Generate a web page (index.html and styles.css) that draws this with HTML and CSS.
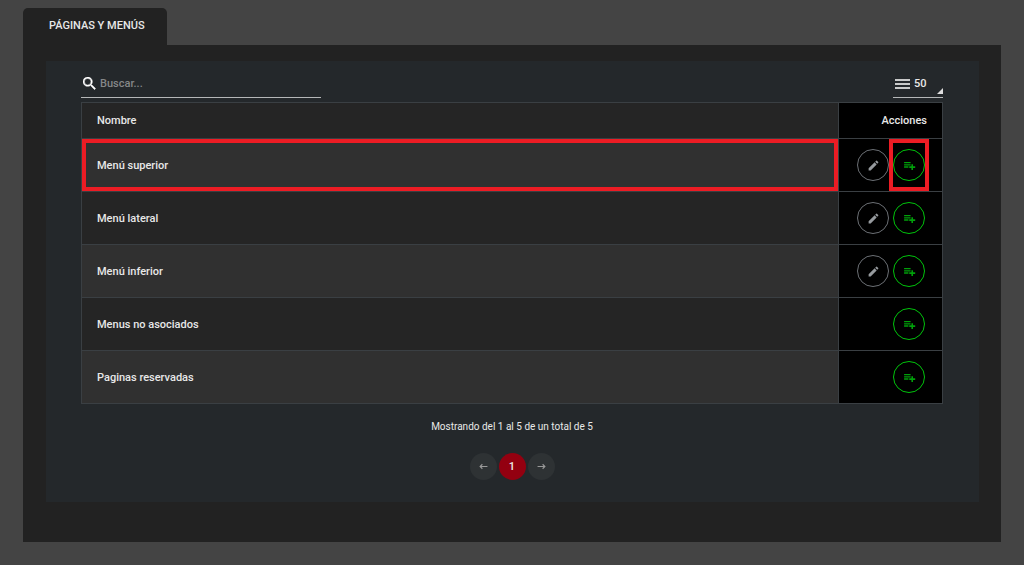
FILE: index.html
```html
<!DOCTYPE html>
<html lang="es">
<head>
<meta charset="utf-8">
<meta name="viewport" content="width=device-width, initial-scale=1">
<title>Páginas y menús</title>
<link rel="stylesheet" href="styles.css">
</head>
<body>
<svg class="sprite" aria-hidden="true">
  <symbol id="pencil" viewBox="0 0 24 24"><path d="M3 17.25V21h3.75L17.8 9.95l-3.75-3.75L3 17.25zM20.7 7.05a1 1 0 0 0 0-1.42l-2.34-2.33a1 1 0 0 0-1.41 0l-1.83 1.83 3.75 3.75 1.83-1.83z"/></symbol>
  <symbol id="list-add" viewBox="0 0 24 24"><path d="M14 9.5H2v2.5h12V9.5zm0-4H2V8h12V5.500zm4.500 8v-4h-3v4h-4v3h4v4h3v-4h4v-3h-4zM2 16h8v-2.500H2V16z"/></symbol>
</svg>
<main class="page">
  <nav class="tabs"><a class="tab" href="#paginas">PÁGINAS Y MENÚS</a></nav>
  <section class="panel" id="paginas">
    <div class="card">
      <div class="toolbar">
        <label class="search">
          <svg class="search-icon" viewBox="3 3 18 18" aria-hidden="true"><path d="M15.5 14h-.8l-.3-.3A6.5 6.5 0 1 0 13.7 14.4l.3.3v.8l5 5 1.5-1.5-5-5zm-6 0a4.5 4.5 0 1 1 0-9 4.500 4.500 0 0 1 0 9z"/></svg>
          <input class="search-input" type="text" placeholder="Buscar..." aria-label="Buscar">
        </label>
        <label class="page-size">
          <svg class="lines-icon" viewBox="0 0 15 10" aria-hidden="true"><path d="M0 .2h15v1.600H0zM0 4.200h15v1.600H0zM0 8.200h15v1.600H0z"/></svg>
          <select class="size-select" aria-label="Registros por página"><option>50</option><option>100</option></select>
        </label>
      </div>
      <table class="menus">
        <thead>
          <tr><th class="name" scope="col">Nombre</th><th class="actions" scope="col">Acciones</th></tr>
        </thead>
        <tbody>
          <tr>
            <td class="name marked">Menú superior</td>
            <td class="actions"><div class="buttons">
              <button class="round edit" type="button" aria-label="Editar"><svg class="pencil"><use href="#pencil"/></svg></button>
              <button class="round add marked" type="button" aria-label="Añadir"><svg class="list-add"><use href="#list-add"/></svg></button>
            </div></td>
          </tr>
          <tr>
            <td class="name">Menú lateral</td>
            <td class="actions"><div class="buttons">
              <button class="round edit" type="button" aria-label="Editar"><svg class="pencil"><use href="#pencil"/></svg></button>
              <button class="round add" type="button" aria-label="Añadir"><svg class="list-add"><use href="#list-add"/></svg></button>
            </div></td>
          </tr>
          <tr>
            <td class="name">Menú inferior</td>
            <td class="actions"><div class="buttons">
              <button class="round edit" type="button" aria-label="Editar"><svg class="pencil"><use href="#pencil"/></svg></button>
              <button class="round add" type="button" aria-label="Añadir"><svg class="list-add"><use href="#list-add"/></svg></button>
            </div></td>
          </tr>
          <tr>
            <td class="name">Menus no asociados</td>
            <td class="actions"><div class="buttons">
              <button class="round add" type="button" aria-label="Añadir"><svg class="list-add"><use href="#list-add"/></svg></button>
            </div></td>
          </tr>
          <tr>
            <td class="name">Paginas reservadas</td>
            <td class="actions"><div class="buttons">
              <button class="round add" type="button" aria-label="Añadir"><svg class="list-add"><use href="#list-add"/></svg></button>
            </div></td>
          </tr>
        </tbody>
      </table>
      <p class="summary">Mostrando del 1 al 5 de un total de 5</p>
      <nav class="pager" aria-label="Paginación">
        <button class="page-button" type="button" aria-label="Anterior"><svg class="arrow" viewBox="0 0 16 12"><path d="M15 6H2M6 2L2 6l4 4"/></svg></button>
        <button class="page-button current" type="button">1</button>
        <button class="page-button" type="button" aria-label="Siguiente"><svg class="arrow" viewBox="0 0 16 12"><path d="M1 6h13M10 2l4 4-4 4"/></svg></button>
      </nav>
    </div>
  </section>
</main>
</body>
</html>
```

FILE: styles.css
```css
* { box-sizing: border-box; }

body {
  margin: 0;
  background: #444;
  color: #e8e8e8;
  font: 500 11px/16px Roboto, sans-serif;
}

input, select, button { font: inherit; color: inherit; }

.sprite { display: none; }

.page { padding: 8px 23px 23px; }

.tabs { display: flex; }

.tab {
  padding: 10px 22px 11px 26px;
  border-radius: 5px 5px 0 0;
  background: #222;
  color: #e8e8e8;
  text-decoration: none;
}

.panel {
  padding: 16px 22px 40px 23px;
  background: #222;
}

.card {
  padding: 9px 36px 22px 35px;
  background: #24282b;
}

.toolbar {
  display: flex;
  justify-content: space-between;
  margin-bottom: 4px;
}

.search {
  display: flex;
  align-items: center;
  gap: 4px;
  width: 240px;
  height: 28px;
  padding-left: 2px;
  border-bottom: 1px solid #b5b7b8;
}

.search-icon {
  width: 13px;
  height: 13px;
  fill: #fff;
  stroke: #fff;
  stroke-width: 0.6;
}

.search-input {
  flex: 1;
  min-width: 0;
  padding: 0;
  border: 0;
  outline: 0;
  background: none;
}

.search-input::placeholder { color: #858788; opacity: 1; }

.page-size {
  position: relative;
  display: flex;
  align-items: center;
  gap: 4px;
  width: 50px;
  height: 28px;
  padding-left: 2px;
  border-bottom: 1px solid #b5b7b8;
}

.page-size::after {
  content: "";
  position: absolute;
  right: 0;
  bottom: 3px;
  border-style: solid;
  border-width: 0 0 6px 6px;
  border-color: transparent transparent #ddd;
}

.lines-icon {
  flex: none;
  width: 15px;
  height: 10px;
  fill: #fff;
}

.size-select {
  flex: 1;
  min-width: 0;
  padding: 0;
  border: 0;
  outline: 0;
  background: none;
  appearance: none;
}

.menus {
  width: 100%;
  border-collapse: collapse;
}

.menus th, .menus td {
  height: 53px;
  padding: 2px 15px 0;
  border: 1px solid #3a3f43;
  text-align: left;
  font-weight: 500;
}

.menus th { height: 36px; padding-top: 0; }

.menus .name { background: #252525; }

.menus tbody tr:nth-child(odd) .name { background: #303030; }

.menus .actions {
  width: 104px;
  background: #000;
  text-align: right;
}

.menus td.actions { padding: 0 17px; }

.buttons {
  display: flex;
  justify-content: flex-end;
  gap: 4px;
}

.round {
  display: flex;
  align-items: center;
  justify-content: center;
  width: 32px;
  height: 32px;
  padding: 0;
  border: 1px solid;
  border-radius: 50%;
  background: none;
}

.edit { border-color: #6c7075; color: #969a9e; }

.add { border-color: #00c40c; color: #00a00a; }

.pencil, .list-add {
  width: 13px;
  height: 13px;
  fill: currentColor;
}

.marked { position: relative; }

.marked::after {
  content: "";
  position: absolute;
  inset: 0;
  border: 4px solid #ec1c24;
}

.add.marked::after { inset: -11px -5px; }

.summary {
  margin: 15px 0 18px;
  font-size: 10px;
  font-weight: 400;
  text-align: center;
}

.pager {
  display: flex;
  justify-content: center;
  gap: 2px;
}

.page-button {
  display: flex;
  align-items: center;
  justify-content: center;
  width: 27px;
  height: 27px;
  padding: 0;
  border: 0;
  border-radius: 50%;
  background: #2e3234;
  color: #999;
}

.page-button.current { background: #930010; color: #eee; }

.arrow {
  width: 9px;
  height: 7px;
  fill: none;
  stroke: currentColor;
  stroke-width: 2;
}
```
